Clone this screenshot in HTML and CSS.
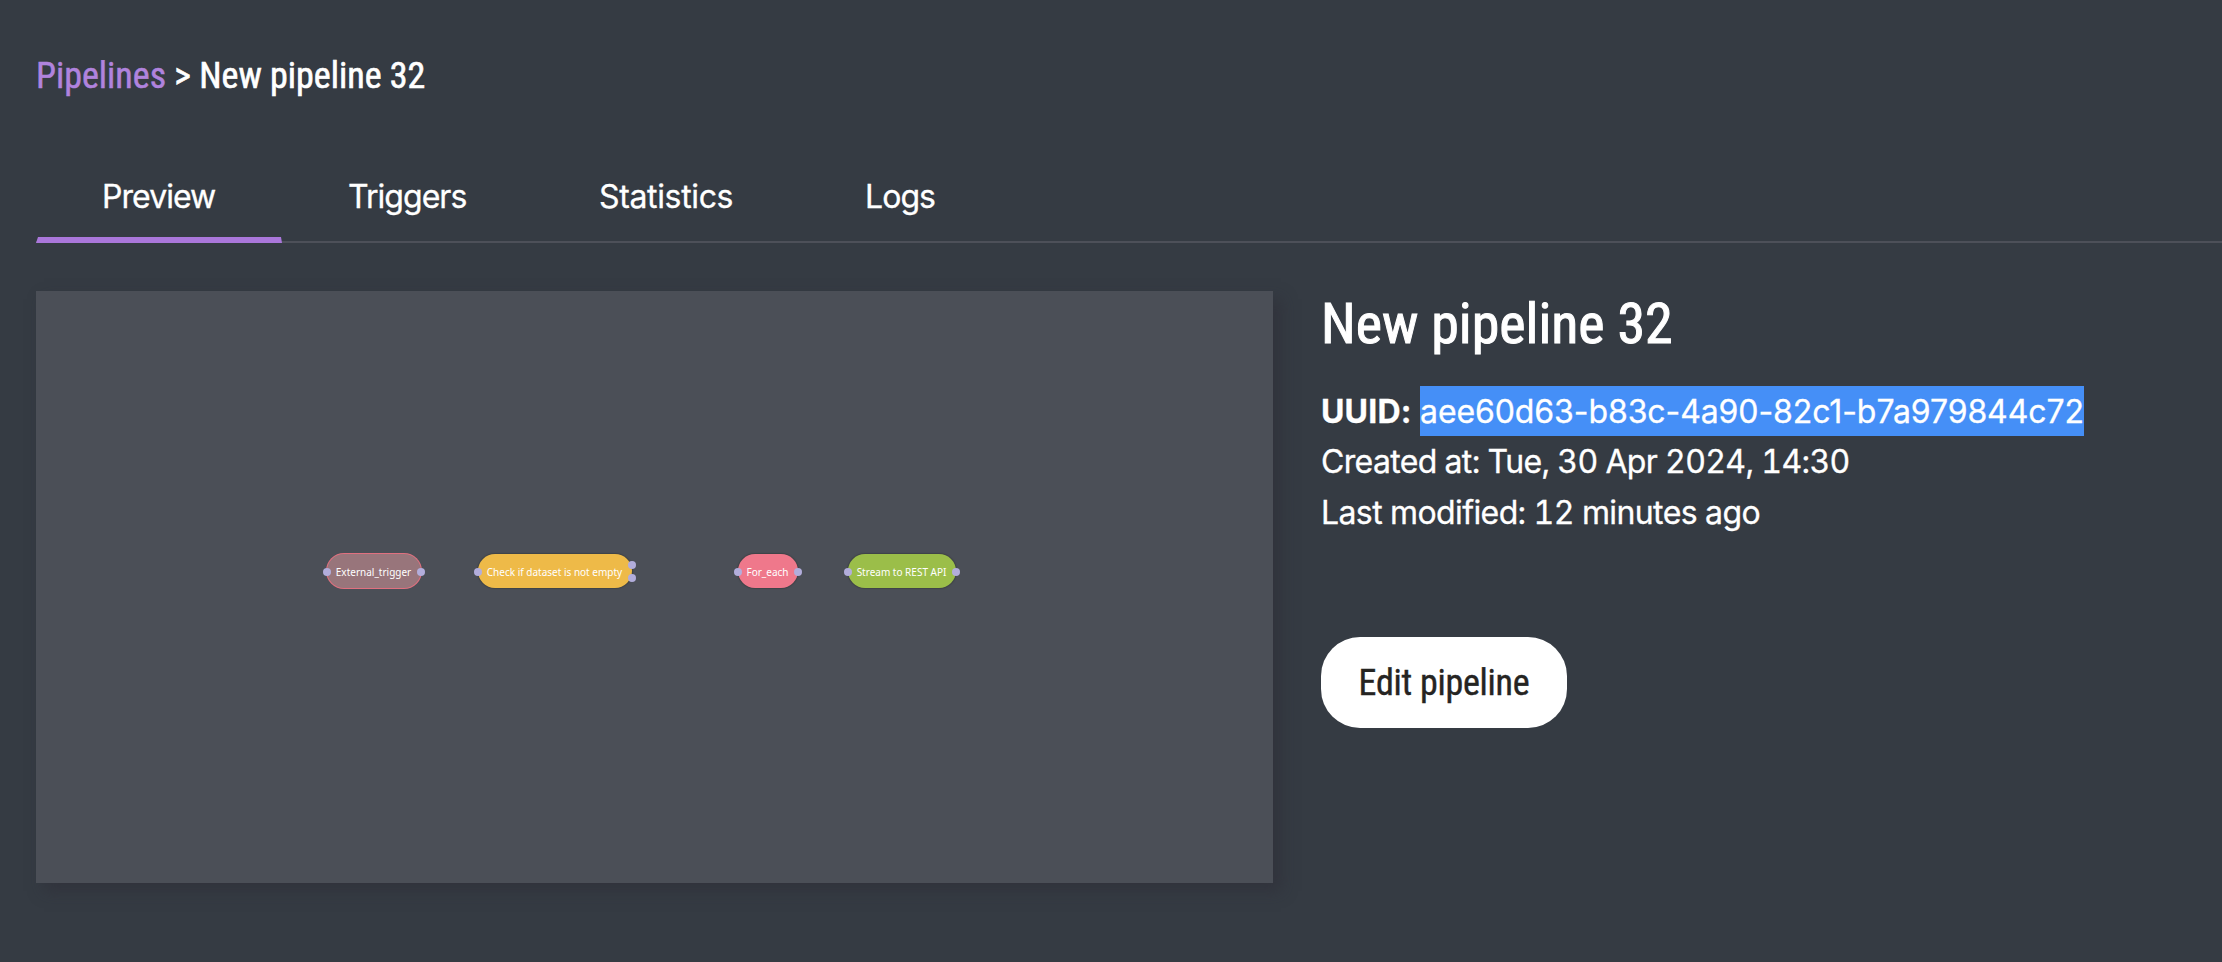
FILE: index.html
```html
<!DOCTYPE html>
<html lang="en">
<head>
<meta charset="utf-8">
<title>New pipeline 32</title>
<link rel="stylesheet" href="styles.css">
</head>
<body>
<nav class="breadcrumb"><a class="crumb-link">Pipelines</a> &gt; New pipeline 32</nav>
<div class="tabs">
  <a class="tab active">Preview</a>
  <a class="tab triggers">Triggers</a>
  <a class="tab statistics">Statistics</a>
  <a class="tab logs">Logs</a>
</div>
<main class="content">
  <section class="preview">
    <div class="node external">External_trigger<i class="port left"></i><i class="port right"></i></div>
    <div class="node check">Check if dataset is not empty<i class="port left"></i><i class="port yes"></i><i class="port no"></i></div>
    <div class="node each">For_each<i class="port left"></i><i class="port right"></i></div>
    <div class="node stream">Stream to REST API<i class="port left"></i><i class="port right"></i></div>
  </section>
  <section class="info">
    <h1 class="title">New pipeline 32</h1>
    <p class="line"><b class="label">UUID:</b><span class="uuid">aee60d63-b83c-4a90-82c1-b7a979844c72</span></p>
    <p class="line created">Created at: Tue, 30 Apr 2024, 14:30</p>
    <p class="line modified">Last modified: 12 minutes ago</p>
    <button class="edit">Edit pipeline</button>
  </section>
</main>
</body>
</html>
```
FILE: styles.css
```css
* { box-sizing: border-box; }
body {
  margin: 0;
  height: 962px;
  overflow: hidden;
  background: #353b43;
  color: #fff;
  font: 32px/52px Inter, sans-serif;
  -webkit-text-stroke: .3px;
}
.breadcrumb {
  height: 171px;
  padding: 51px 0 0 36px;
  font: 400 36px/50px "Roboto Condensed", Roboto, sans-serif;
  font-stretch: 75%;
  -webkit-text-stroke: .6px;
  white-space: nowrap;
}
.crumb-link { color: #b083de; -webkit-text-stroke: .5px; }
.tabs {
  display: flex;
  height: 72px;
  margin-left: 36px;
  border-bottom: 2px solid #4d5059;
}
.tab {
  height: 72px;
  padding-left: 66px;
  white-space: nowrap;
  letter-spacing: -.95px;
}
.tab.active {
  width: 246px;
  background: linear-gradient(#aa77db, #aa77db) bottom / 100% 6px no-repeat;
  clip-path: polygon(0 0, 100% 0, 100% 66px, calc(100% - 1px) 66px, 100% 100%, 0 100%, 2px 66px, 0 66px);
}
.triggers { width: 251px; }
.statistics { width: 266px; letter-spacing: -.35px; }
.content { display: flex; gap: 48px; padding: 48px 0 0 36px; }
.preview {
  position: relative;
  width: 1237px;
  height: 592px;
  background: #4b4f57;
  box-shadow: 8px 8px 14px rgba(46, 43, 54, .5);
}
.node {
  position: absolute;
  top: 263px;
  height: 34px;
  border-radius: 17px;
  font: 10px/36px "Noto Sans", sans-serif;
  -webkit-text-stroke: 0;
  text-align: center;
  text-indent: -1px;
  white-space: nowrap;
  box-shadow: 0 0 1px 1px #3f4347;
}
.external { left: 291px; width: 94px; background: #98757b; box-shadow: 0 0 0 1px #e0707f; }
.check { left: 442px; width: 154px; background: #eeba48; }
.each { left: 702px; width: 60px; background: #ef788b; }
.stream { left: 812px; width: 108px; background: #9bbe49; }
.port {
  position: absolute;
  top: 14px;
  width: 8px;
  height: 8px;
  border-radius: 50%;
  background: #b2addb;
}
.left { left: -4px; }
.right { right: -4px; }
.yes { right: -4px; top: 7px; }
.no { right: -4px; top: 20px; }
.title {
  margin: 0 0 30px;
  padding-top: 1px;
  font: 400 56px/64px "Roboto Condensed", Roboto, sans-serif;
  font-stretch: 75%;
  -webkit-text-stroke: 1px;
  white-space: nowrap;
}
.line {
  margin: 0;
  height: 50px;
  white-space: nowrap;
  display: flex;
}
.label { width: 99px; letter-spacing: .2px; }
.uuid { background: #458ff7; width: 664px; letter-spacing: -.09px; }
.created { letter-spacing: -.66px; font-variant-numeric: tabular-nums; }
.modified { letter-spacing: -.6px; padding-top: 1px; font-variant-numeric: tabular-nums; }
.edit {
  display: block;
  width: 246px;
  height: 91px;
  margin-top: 101px;
  padding: 2px 0 0;
  border: 0;
  border-radius: 39px;
  background: #fff;
  color: #252422;
  font: 400 36px/89px "Roboto Condensed", Roboto, sans-serif;
  font-stretch: 75%;
  letter-spacing: -.25px;
  -webkit-text-stroke: .4px;
}
```
